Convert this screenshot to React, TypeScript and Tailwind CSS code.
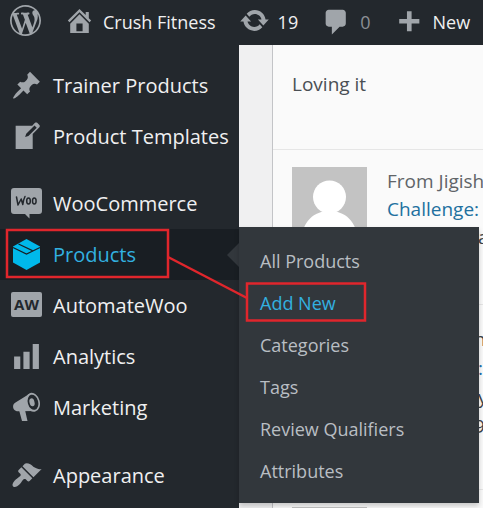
import type { ReactNode } from "react";

const paths = {
  wordpress:
    "M20 10c0-5.51-4.49-10-10-10C4.48 0 0 4.49 0 10c0 5.52 4.48 10 10 10 5.51 0 10-4.48 10-10zM7.78 15.37L4.37 6.22c.55-.02 1.17-.08 1.17-.08.5-.06.44-1.13-.06-1.11 0 0-1.45.11-2.37.11-.18 0-.37 0-.58-.01C4.12 2.69 6.87 1.11 10 1.11c2.33 0 4.45.87 6.05 2.34-.68-.11-1.65.39-1.65 1.58 0 .74.45 1.36.9 2.1.35.61.55 1.36.55 2.46 0 1.49-1.4 5-1.4 5l-3.03-8.37c.54-.02.82-.17.82-.17.5-.05.44-1.25-.06-1.22 0 0-1.44.12-2.38.12-.87 0-2.33-.12-2.33-.12-.5-.03-.56 1.2-.06 1.22l.92.08 1.26 3.41zM17.41 10c.24-.64.74-1.87.43-4.25.7 1.29 1.05 2.71 1.05 4.25 0 3.29-1.73 6.24-4.4 7.78.97-2.59 1.94-5.2 2.92-7.78zM6.1 18.09C3.12 16.65 1.11 13.53 1.11 10c0-1.3.23-2.48.72-3.59C3.25 10.3 4.67 14.2 6.1 18.09zm4.03-6.63l2.58 6.98c-.86.29-1.76.45-2.71.45-.79 0-1.57-.11-2.29-.33.81-2.38 1.62-4.74 2.42-7.1z",
  home: "M16 8.5l1.53 1.53-1.06 1.06L10 4.6l-6.47 6.49-1.06-1.06L10 2.5l4 4v-2h2v4zm-6-2.46l6 5.99V18H4v-5.97zM12 17v-5H8v5h4z",
  update:
    "M10.2 3.28c3.53 0 6.43 2.61 6.92 6h2.08l-3.5 4-3.5-4h2.32c-.45-1.97-2.21-3.45-4.32-3.45-1.45 0-2.73.71-3.54 1.78L4.95 5.66C6.23 4.2 8.11 3.28 10.2 3.28zm-.4 13.44c-3.52 0-6.43-2.61-6.92-6H.8l3.5-4c1.17 1.33 2.33 2.67 3.5 4H5.48c.45 1.97 2.21 3.45 4.32 3.45 1.45 0 2.73-.71 3.54-1.78l1.71 1.95c-1.28 1.46-3.15 2.38-5.25 2.38z",
  comment:
    "M5 3h9c1.1 0 2 .9 2 2v7c0 1.1-.9 2-2 2h-2l-5 5v-5H5c-1.1 0-2-.9-2-2V5c0-1.1.9-2 2-2z",
  plus: "M17 9v3h-5v5H9v-5H4v-3h5v-5h3v5h5z",
  pin: "M10.44 3.02l1.82-1.82 6.36 6.35-1.83 1.82c-1.05-.68-2.48-.57-3.41.36l-.75.75c-.92.93-1.04 2.35-.35 3.41l-1.83 1.82-2.41-2.41-2.8 2.79c-.42.42-3.38 2.71-3.8 2.29s1.86-3.39 2.28-3.81l2.79-2.79L4.1 9.36l1.83-1.82c1.05.69 2.48.57 3.4-.36l.75-.75c.93-.92 1.05-2.35.36-3.41z",
  write:
    "M16.89 1.2l1.41 1.41c.39.39.39 1.02 0 1.41L14 8.33V18H3V3h10.67l1.8-1.8c.4-.39 1.03-.4 1.42 0zm-5.66 8.48l5.37-5.36-1.42-1.42-5.36 5.37-.71 2.12z",
  chart: "M18 18V2h-4v16h4zm-6 0V7H8v11h4zm-6 0v-8H2v8h4z",
  brush:
    "M14.48 11.06L7.41 3.99l1.5-1.5c.5-.56 2.3-.47 3.51.32 1.21.8 1.43 1.28 2.91 2.1 1.18.64 2.45 1.26 4.45.85zm-.71.71L6.7 4.7 4.93 6.47c-.39.39-.39 1.02 0 1.41l1.06 1.06c.39.39.39 1.03 0 1.42-.6.6-1.43 1.11-2.21 1.69-.35.26-.7.53-1.01.84C1.43 14.23.4 16.08 1.4 17.07c.99 1 2.84-.03 4.18-1.36.31-.31.58-.66.85-1.02.57-.78 1.08-1.61 1.69-2.21.39-.39 1.02-.39 1.41 0l1.06 1.06c.39.39 1.02.39 1.41 0z",
};

function Icon({ name }: { name: keyof typeof paths }) {
  return (
    <svg viewBox="0 0 20 20" className="size-[31px] shrink-0 fill-[#a0a5aa]" aria-hidden="true">
      <path d={paths[name]} />
    </svg>
  );
}

function WooIcon() {
  return (
    <svg viewBox="0 0 31 31" className="size-[31px] shrink-0" aria-hidden="true">
      <path d="M3 0H28a3 3 0 0 1 3 3V23a3 3 0 0 1-3 3H18.500V30.500L14 26H3a3 3 0 0 1-3-3V3a3 3 0 0 1 3-3z" fill="#a0a5aa" />
      <g fill="none" stroke="#23282d" strokeWidth="1.500" strokeLinecap="round" strokeLinejoin="round">
        <path d="M5.500 9l1.500 8 3.200-6 1.600 5.500c.3-3 .9-5.500 2.200-8" />
        <ellipse cx="17.500" cy="13" rx="1.800" ry="3" />
        <ellipse cx="23.300" cy="13" rx="1.800" ry="3" />
      </g>
    </svg>
  );
}

function BoxIcon() {
  return (
    <svg viewBox="0 0 31 31" className="size-[31px] shrink-0" aria-hidden="true">
      <path d="M15.500 0L29 7.500v16L15.500 31 2 23.500v-16z" fill="#00b9eb" />
      <path d="M2 8.500l13.500 6.500L29 8.500M7.500 5L21 11.500v1" fill="none" stroke="#191e23" strokeWidth="1.200" />
    </svg>
  );
}

function AutomateIcon() {
  return (
    <svg viewBox="0 0 31 31" className="size-[31px] shrink-0" aria-hidden="true">
      <rect y="2" width="31" height="25" rx="2" fill="#a0a5aa" />
      <text x="15.500" y="20" textAnchor="middle" fontSize="15" fontWeight="700" fill="#23282d" className="font-['Open_Sans',sans-serif]">
        AW
      </text>
    </svg>
  );
}

function MegaphoneIcon() {
  return (
    <svg viewBox="0 0 31 31" className="size-[31px] shrink-0" aria-hidden="true">
      <g fill="#a0a5aa">
        <path d="M19 1.500L4.500 10.500C1.500 12 1.500 16 3.500 18c1 1 2 1.300 3.500 1.300L24 19z" />
        <path d="M8 18l3 11h5.500L14 18z" />
        <ellipse cx="21.800" cy="10.300" rx="7" ry="9.600" transform="rotate(-15 21.800 10.300)" />
      </g>
      <ellipse cx="22" cy="10.300" rx="5.200" ry="7.700" transform="rotate(-15 22 10.300)" fill="#23282d" />
      <ellipse cx="21" cy="10.300" rx="2.500" ry="4" transform="rotate(-15 21 10.300)" fill="#a0a5aa" />
    </svg>
  );
}

function MenuItem({ icon, label }: { icon: ReactNode; label: string }) {
  return (
    <li>
      <a href="#" className="flex h-[51px] items-center gap-[11px] pl-[11px] text-[#f0f0f1]">
        {icon}
        {label}
      </a>
    </li>
  );
}

function BarItem({ icon, label }: { icon: keyof typeof paths; label: string }) {
  return (
    <a href="#" className="flex items-center gap-2">
      <Icon name={icon} />
      <span className={label === "0" ? "pt-[3px] text-[#8c8f94]" : "pt-[3px]"}>{label}</span>
    </a>
  );
}

function Avatar() {
  return (
    <svg viewBox="0 0 75 75" className="size-[75px] shrink-0" aria-hidden="true">
      <rect width="75" height="75" fill="#c3c3c3" />
      <circle cx="37.500" cy="30" r="16.500" fill="#fff" />
      <path d="M9 75C10 54 22 44 37.500 44S65 54 66 75z" fill="#fff" />
    </svg>
  );
}

const submenu = ["All Products", "Add New", "Categories", "Tags", "Review Qualifiers", "Attributes"];

export default function App() {
  return (
    <div className="flex h-screen flex-col overflow-hidden bg-[#f0f0f1] font-['Open_Sans',sans-serif] text-[19px] leading-7">
      <header className="flex h-[45px] shrink-0 items-center gap-[23px] bg-[#23282d] pb-1 pl-[10px] text-[18px] whitespace-nowrap text-[#f0f0f1]">
        <a href="#" aria-label="WordPress">
          <Icon name="wordpress" />
        </a>
        <BarItem icon="home" label="Crush Fitness" />
        <BarItem icon="update" label="19" />
        <BarItem icon="comment" label="0" />
        <BarItem icon="plus" label="New" />
      </header>

      <div className="flex min-h-0 grow">
        <nav className="relative z-10 w-[239px] shrink-0 bg-[#23282d] pt-[15px] text-[20px] whitespace-nowrap">
          <ul>
            <MenuItem icon={<Icon name="pin" />} label="Trainer Products" />
            <MenuItem icon={<Icon name="write" />} label="Product Templates" />
            <li className="h-4" />
            <MenuItem icon={<WooIcon />} label="WooCommerce" />
            <li className="relative bg-[#191e23]">
              <a href="#" className="flex h-[51px] items-center gap-[11px] pl-[11px] text-[#32b1e0]">
                <BoxIcon />
                Products
              </a>
              <div className="absolute top-[14px] right-0 border-y-12 border-r-12 border-y-transparent border-r-[#32373c]" />
              <ul className="absolute -top-[2px] left-full w-[240px] bg-[#32373c] pt-[13px] pb-[11px] text-[18px] text-[#b9bec3] shadow-[0_3px_5px_rgba(0,0,0,0.2)]">
                {submenu.map((label) => (
                  <li key={label}>
                    <a
                      href="#"
                      className={label === "Add New" ? "flex h-[42px] items-center pl-[21px] text-[#32b1e0]" : "flex h-[42px] items-center pl-[21px]"}
                    >
                      {label}
                    </a>
                  </li>
                ))}
              </ul>
              {/* Callout linking the menu entry to its submenu action */}
              <svg className="pointer-events-none absolute -top-[2px] left-0 h-[100px] w-[370px]" viewBox="0 0 370 100" fill="none" stroke="#e0262c" strokeWidth="2.500" aria-hidden="true">
                <rect x="7" y="3" width="161" height="47" />
                <rect x="247" y="56.500" width="118" height="37" />
                <path d="M168 30L247 71" />
              </svg>
            </li>
            <MenuItem icon={<AutomateIcon />} label="AutomateWoo" />
            <MenuItem icon={<Icon name="chart" />} label="Analytics" />
            <MenuItem icon={<MegaphoneIcon />} label="Marketing" />
            <li className="h-[17px]" />
            <MenuItem icon={<Icon name="brush" />} label="Appearance" />
          </ul>
        </nav>

        <main className="ml-[33px] min-w-0 grow overflow-hidden border-l border-[#c3c4c7] bg-[#fafafa] whitespace-nowrap text-[#606468]">
          <article className="h-[105px] border-b border-[#e6e6e6] pt-[25px] pl-[19px] text-[#4a4f54]">
            <p>Loving it</p>
          </article>
          <article className="flex h-[155px] gap-5 border-b border-[#e6e6e6] pt-[17px] pl-[19px]">
            <Avatar />
            <div>
              <p>From Jigisha</p>
              <p>
                <a href="#" className="text-[#21709f]">
                  Challenge: 2
                </a>
              </p>
              <p className="pl-[91px] text-[#3c434a]">a</p>
            </div>
          </article>
          <article className="flex h-[185px] flex-col border-b border-[#e6e6e6] pt-[20px] pl-[201px] leading-[29px] text-[#3c434a]">
            <p>n</p>
            <p className="pl-[4px] text-[#2271b1]">:</p>
            <p className="pl-[4px]">y</p>
            <p>9</p>
          </article>
          <article className="flex pt-[17px] pl-[19px]">
            <Avatar />
          </article>
        </main>
      </div>
    </div>
  );
}
